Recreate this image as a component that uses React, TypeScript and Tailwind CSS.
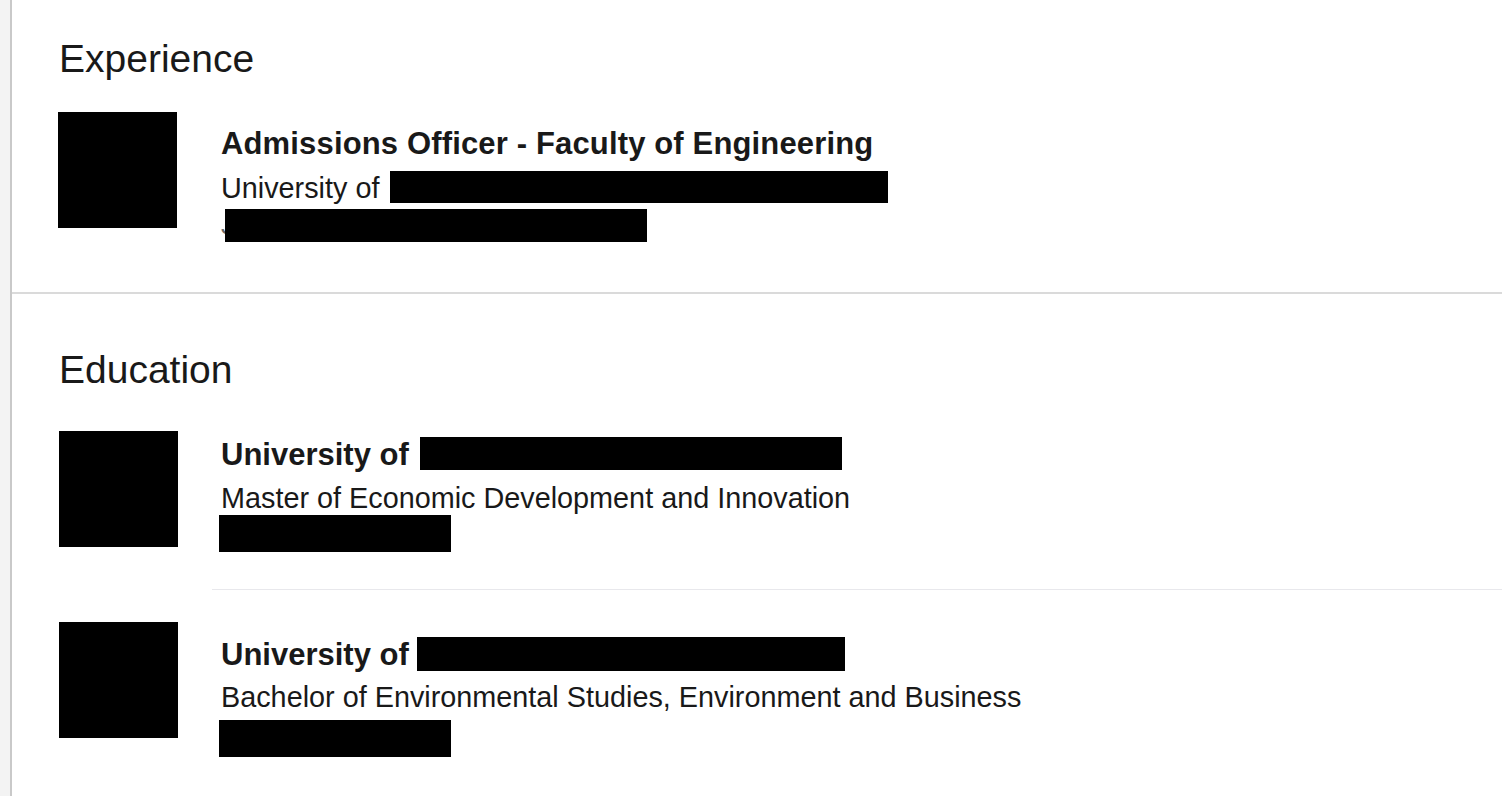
const font = { fontFamily: '"Liberation Sans", Arial, sans-serif' }

function Logo({ className = '' }: { className?: string }) {
  return <div className={`w-[119px] h-[116px] bg-black shrink-0 ${className}`} />
}

function Redact({ className = '' }: { className?: string }) {
  return <div className={`bg-black shrink-0 ${className}`} />
}

export default function App() {
  return (
    <div className="flex min-h-[796px] bg-white text-[#191919]" style={font}>
      <div className="w-[10px] shrink-0 bg-[#f3f3f3]" />

      <div className="flex-1 border-l-2 border-[#c9c9c9]">
        {/* Experience */}
        <section className="pl-[47px] pt-[36px] pb-[50px] border-b-2 border-[#dadada]">
          <h2 className="text-[39px] leading-[46px] h-[46px] font-normal">Experience</h2>

          <div className="flex mt-[30px]">
            <Logo className="-ml-[1px]" />
            <div className="ml-[35px] pl-[9px] pt-[11px]">
              <div className="text-[31px] leading-[42px] h-[44px] font-bold tracking-[0.15px]">
                Admissions Officer - Faculty of Engineering
              </div>
              <div className="flex items-start text-[28.8px] leading-[42px] h-[42px]">
                <span>University of</span>
                <Redact className="ml-[11px] mt-[4px] w-[498px] h-[32px]" />
              </div>
              <div className="relative h-[33px] text-[26px] leading-[33px] text-[#666666] overflow-hidden">
                <span>J</span>
                <Redact className="absolute left-[4px] top-0 w-[422px] h-[33px]" />
              </div>
            </div>
          </div>
        </section>

        {/* Education */}
        <section className="pl-[47px] pt-[53px]">
          <h2 className="text-[39px] leading-[46px] h-[46px] font-normal">Education</h2>

          <div className="flex mt-[38px]">
            <Logo />
            <div className="flex-1 ml-[34px] pl-[9px] pt-[3px] pb-[37px] border-b border-[#e8e8ec]">
              <div className="flex items-start text-[31px] leading-[42px] h-[46px] font-bold">
                <span>University of</span>
                <Redact className="ml-[11px] mt-[3px] w-[422px] h-[33px]" />
              </div>
              <div className="text-[28.8px] leading-[36px] h-[36px]">
                Master of Economic Development and Innovation
              </div>
              <Redact className="-mt-[1px] -ml-[2px] w-[232px] h-[37px]" />
            </div>
          </div>

          <div className="flex mt-[32px]">
            <Logo />
            <div className="flex-1 ml-[34px] pl-[9px] pt-[12px]">
              <div className="flex items-start text-[31px] leading-[42px] h-[45px] font-bold">
                <span>University of</span>
                <Redact className="ml-[8px] mt-[3px] w-[428px] h-[34px]" />
              </div>
              <div className="text-[28.8px] leading-[36px] h-[36px]">
                Bachelor of Environmental Studies, Environment and Business
              </div>
              <Redact className="mt-[5px] -ml-[2px] w-[232px] h-[37px]" />
            </div>
          </div>
        </section>
      </div>
    </div>
  )
}
